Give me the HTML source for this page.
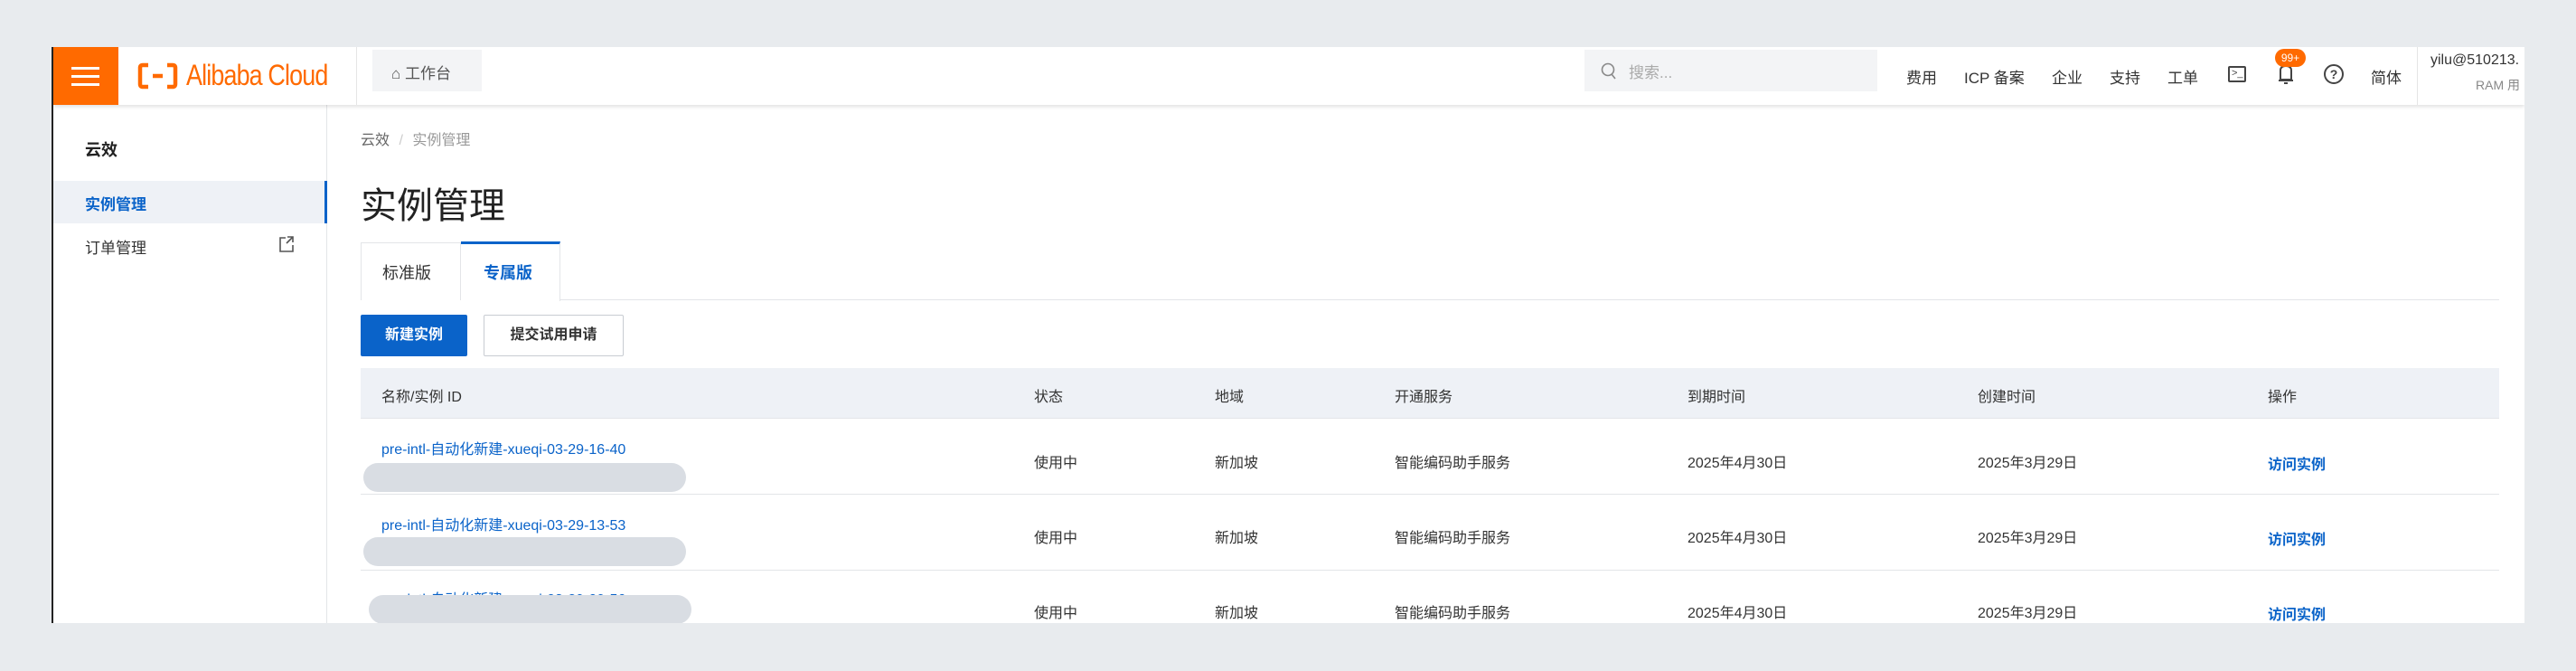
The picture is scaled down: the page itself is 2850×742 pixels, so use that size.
<!DOCTYPE html>
<html><head><meta charset="utf-8"><style>
*{margin:0;padding:0;box-sizing:border-box}
body{width:2850px;height:742px;background:#e8ebee;font-family:"Liberation Sans","Noto Sans CJK SC",sans-serif;position:relative;overflow:hidden;color:#333}
.a{position:absolute;white-space:nowrap}
.frame{position:absolute;left:57px;top:52px;width:2736px;height:637px;background:#fff;overflow:hidden;border-left:2px solid #222}
.hdr{position:absolute;left:0;top:0;width:100%;height:64px;background:#fff;box-shadow:0 2px 4px rgba(0,0,0,.12);z-index:2}
.nav{font-size:17px;color:#333;top:22px}
.td{font-size:16px;color:#333}
.lk{color:#0a63c9}
.blob{position:absolute;background:#d9dde3;border-radius:18px;height:32px}
</style></head><body>
<div class="frame">
 <div class="hdr">
  <div class="a" style="left:0;top:0;width:72px;height:64px;background:#ff6a00"></div>
  <div class="a" style="left:20px;top:22px;width:31px;height:3px;background:#fff"></div>
  <div class="a" style="left:20px;top:31px;width:31px;height:3px;background:#fff"></div>
  <div class="a" style="left:20px;top:40px;width:31px;height:3px;background:#fff"></div>
  <svg class="a" style="left:93px;top:17px" width="45" height="30" viewBox="0 0 45 30"><path d="M12 3H6Q3 3 3 6V24Q3 27 6 27H12M33 3H39Q42 3 42 6V24Q42 27 39 27H33M17 15H28" fill="none" stroke="#ff6a00" stroke-width="4.5"/></svg>
  <div class="a" style="left:147px;top:13px;font-size:32px;color:#ff6a00;letter-spacing:-1px;transform:scaleX(0.84);transform-origin:left top">Alibaba Cloud</div>
  <div class="a" style="left:335px;top:0;width:1px;height:64px;background:#e5e5e5"></div>
  <div class="a" style="left:353px;top:3px;width:121px;height:46px;background:#f3f4f6"></div>
  <div class="a" style="left:374px;top:15px;font-size:17px;color:#555">⌂ 工作台</div>
  <div class="a" style="left:1694px;top:3px;width:324px;height:46px;background:#f3f4f6"></div>
  <svg class="a" style="left:1712px;top:17px" width="18" height="20"><circle cx="8" cy="8" r="6.5" fill="none" stroke="#888" stroke-width="1.6"/><path d="M12 13L16 18" stroke="#888" stroke-width="1.6"/></svg>
  <div class="a" style="left:1743px;top:14px;font-size:17px;color:#aaa">搜索...</div>
  <div class="a nav" style="left:2050px;top:20px">费用</div>
  <div class="a nav" style="left:2114px;top:20px">ICP 备案</div>
  <div class="a nav" style="left:2211px;top:20px">企业</div>
  <div class="a nav" style="left:2275px;top:20px">支持</div>
  <div class="a nav" style="left:2339px;top:20px">工单</div>
  <div class="a" style="left:2406px;top:21px;width:20px;height:18px;border:2px solid #444;border-radius:2px"></div>
  <div class="a" style="left:2410px;top:23px;font-size:11px;color:#444">&gt;_</div>
  <svg class="a" style="left:2460px;top:18px" width="20" height="26"><path d="M4 18V8Q4 3 10 3Q16 3 16 8V18ZM2 19H18M8 22H12" fill="none" stroke="#444" stroke-width="2"/></svg>
  <div class="a" style="left:2458px;top:2px;width:34px;height:20px;border-radius:10px;background:#ff6a00;color:#fff;font-size:12px;text-align:center;line-height:20px">99+</div>
  <div class="a" style="left:2512px;top:19px;width:22px;height:22px;border:2px solid #444;border-radius:50%;font-size:14px;font-weight:bold;text-align:center;line-height:18px;color:#444">?</div>
  <div class="a nav" style="left:2564px;top:20px">简体</div>
  <div class="a" style="left:2615px;top:0;width:1px;height:64px;background:#e5e5e5"></div>
  <div class="a" style="left:2630px;top:6px;font-size:16px;color:#333">yilu@510213.</div>
  <div class="a" style="left:2680px;top:32px;font-size:14px;color:#888">RAM 用</div>
 </div>
 <div class="a" style="left:302px;top:64px;width:1px;height:580px;background:#e3e5e8"></div>
 <div class="a" style="left:35px;top:100px;font-size:18px;font-weight:bold;color:#222">云效</div>
 <div class="a" style="left:0;top:148px;width:303px;height:47px;background:#eef1f6;border-right:3px solid #0a63c9"></div>
 <div class="a" style="left:35px;top:160px;font-size:17px;color:#0a63c9;font-weight:bold">实例管理</div>
 <div class="a" style="left:35px;top:208px;font-size:17px;color:#333">订单管理</div>
 <svg class="a" style="left:249px;top:208px" width="18" height="20"><path d="M8 3H2V18H16V11M10 2H16V8M16 2L9 9" fill="none" stroke="#555" stroke-width="1.6"/></svg>
 <div class="a" style="left:340px;top:89px;font-size:16px;color:#666">云效 <span style="color:#ccc;margin:0 6px">/</span> <span style="color:#999">实例管理</span></div>
 <div class="a" style="left:340px;top:143px;font-size:40px;color:#222">实例管理</div>
 <div class="a" style="left:340px;top:279px;width:2366px;height:1px;background:#e3e5e8"></div>
 <div class="a" style="left:340px;top:216px;width:111px;height:64px;border:1px solid #e3e5e8;border-bottom:none;background:#fff"></div>
 <div class="a" style="left:364px;top:236px;font-size:18px;color:#333">标准版</div>
 <div class="a" style="left:451px;top:215px;width:110px;height:66px;border-top:3px solid #0a63c9;border-right:1px solid #e3e5e8;background:#fff"></div>
 <div class="a" style="left:476px;top:236px;font-size:18px;color:#0a63c9;font-weight:bold">专属版</div>
 <div class="a" style="left:340px;top:296px;width:118px;height:46px;background:#0a63c9;border-radius:2px;color:#fff;font-size:16px;font-weight:bold;text-align:center;line-height:46px">新建实例</div>
 <div class="a" style="left:476px;top:296px;width:155px;height:46px;border:1px solid #c8ccd2;border-radius:2px;color:#333;font-size:16px;font-weight:bold;text-align:center;line-height:44px">提交试用申请</div>
 <div class="a" style="left:340px;top:355px;width:2366px;height:56px;background:#eef1f6;border-bottom:1px solid #e3e5e8"></div>
 <div class="a td" style="left:363px;top:373px">名称/实例 ID</div>
 <div class="a td" style="left:1085px;top:373px">状态</div>
 <div class="a td" style="left:1285px;top:373px">地域</div>
 <div class="a td" style="left:1484px;top:373px">开通服务</div>
 <div class="a td" style="left:1808px;top:373px">到期时间</div>
 <div class="a td" style="left:2129px;top:373px">创建时间</div>
 <div class="a td" style="left:2450px;top:373px">操作</div>
 <div class="a" style="left:340px;top:494px;width:2366px;height:1px;background:#e3e5e8"></div>
 <div class="a" style="left:340px;top:578px;width:2366px;height:1px;background:#e3e5e8"></div>
 <div class="a td lk" style="left:363px;top:431px">pre-intl-自动化新建-xueqi-03-29-16-40</div>
 <div class="blob" style="left:343px;top:460px;width:357px"></div>
 <div class="a td lk" style="left:363px;top:515px">pre-intl-自动化新建-xueqi-03-29-13-53</div>
 <div class="blob" style="left:343px;top:542px;width:357px"></div>
 <div class="a td lk" style="left:363px;top:597px">pre-intl-自动化新建-xueqi-03-29-09-56</div>
 <div class="blob" style="left:349px;top:606px;width:357px"></div>
 <div class="a td" style="left:1085px;top:446px">使用中</div>
 <div class="a td" style="left:1285px;top:446px">新加坡</div>
 <div class="a td" style="left:1484px;top:446px">智能编码助手服务</div>
 <div class="a td" style="left:1808px;top:446px">2025年4月30日</div>
 <div class="a td" style="left:2129px;top:446px">2025年3月29日</div>
 <div class="a td lk" style="left:2450px;top:448px;font-weight:bold">访问实例</div>
 <div class="a td" style="left:1085px;top:529px">使用中</div>
 <div class="a td" style="left:1285px;top:529px">新加坡</div>
 <div class="a td" style="left:1484px;top:529px">智能编码助手服务</div>
 <div class="a td" style="left:1808px;top:529px">2025年4月30日</div>
 <div class="a td" style="left:2129px;top:529px">2025年3月29日</div>
 <div class="a td lk" style="left:2450px;top:531px;font-weight:bold">访问实例</div>
 <div class="a td" style="left:1085px;top:612px">使用中</div>
 <div class="a td" style="left:1285px;top:612px">新加坡</div>
 <div class="a td" style="left:1484px;top:612px">智能编码助手服务</div>
 <div class="a td" style="left:1808px;top:612px">2025年4月30日</div>
 <div class="a td" style="left:2129px;top:612px">2025年3月29日</div>
 <div class="a td lk" style="left:2450px;top:614px;font-weight:bold">访问实例</div>
</div>
</body></html>
